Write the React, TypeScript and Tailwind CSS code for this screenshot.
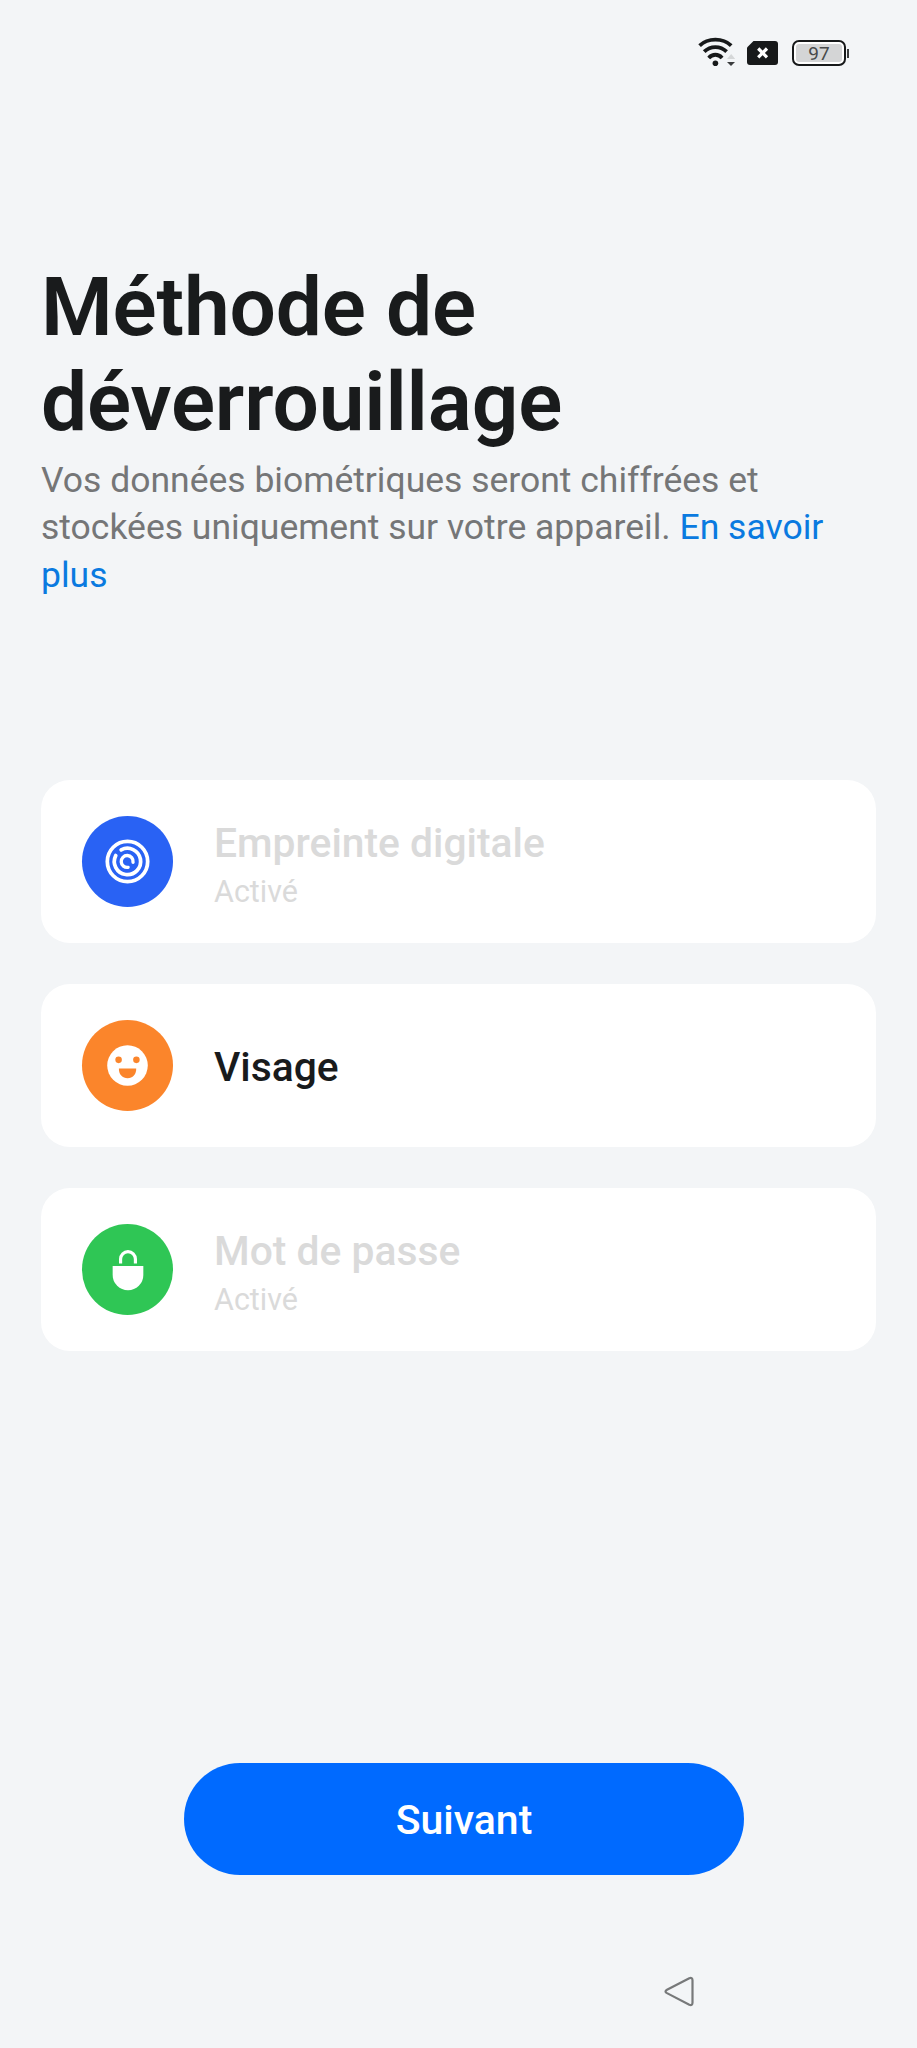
import React from "react";

const FingerprintIcon = () => (
  <svg viewBox="0 0 92 92" className="w-full h-full" fill="none" stroke="white" strokeLinecap="round">
    <circle cx="46" cy="46" r="20.4" strokeWidth="3.8" />
    <path d="M39.6 34.3A13.3 13.3 0 1 1 34.1 40" strokeWidth="3.8" />
    <path d="M46.6 51.9A6 6 0 1 1 51.6 46.8" strokeWidth="3.4" />
  </svg>
);

const FaceIcon = () => (
  <svg viewBox="0 0 92 92" className="w-full h-full">
    <circle cx="46" cy="46" r="20.5" fill="white" />
    <circle cx="37" cy="40.3" r="3.3" fill="#fb852b" />
    <circle cx="55" cy="40.3" r="3.3" fill="#fb852b" />
    <path d="M37.3 49h17.5c.2 6-3.6 9.8-8.7 9.8S37 55 37.3 49z" fill="#fb852b" />
  </svg>
);

const LockIcon = () => (
  <svg viewBox="0 0 92 92" className="w-full h-full">
    <path d="M39 40v-4.5a7.5 7.5 0 0 1 15 0V40" fill="none" stroke="white" strokeWidth="3.2" />
    <path d="M31 42.5h31v9a15.500 15.500 0 0 1-31 0z" fill="white" />
  </svg>
);

const StatusBar = () => (
  <div className="flex h-[106px] items-center pl-[697px]">
    <svg width="38" height="32" viewBox="0 0 38 32" fill="none" stroke="#17191a" strokeWidth="3.8">
      <path d="M2.6 8.6C11 .6 25.8 .6 34.2 8.6" />
      <path d="M7.2 14.7C13.5 8.5 23.3 8.5 29.6 14.7" />
      <path d="M11.7 20.9C15.5 16.7 21.3 16.7 25.1 20.9" />
      <circle cx="18.4" cy="26.3" r="2.8" fill="#17191a" stroke="none" />
      <path d="M30 22l4.2-5 4 5z" fill="#d5d7d8" stroke="none" />
      <path d="M30 25h8l-4 4z" fill="#3b3d3e" stroke="none" />
    </svg>
    <svg className="ml-[12px]" width="31" height="24" viewBox="0 0 31 24">
      <path d="M6.5 0H28a3 3 0 0 1 3 3v18a3 3 0 0 1-3 3H3a3 3 0 0 1-3-3V6.5z" fill="#17191a" />
      <path d="M11.2 7.5l8.8 8.8m0-8.8l-8.8 8.8" stroke="white" strokeWidth="3.2" />
    </svg>
    <div className="ml-[14px] flex h-[26px] w-[54px] rounded-[7px] border-2 border-[#17191a] bg-white p-[2px]">
      <div className="flex flex-1 items-center justify-center rounded-[3px] bg-[#d4d5d6] text-[19px] leading-none text-[#484a4b]">
        97
      </div>
    </div>
    <div className="ml-px h-[9px] w-[2px] bg-[#3b3d3e]" />
  </div>
);

const methods = [
  { title: "Empreinte digitale", status: "Activé", color: "bg-[#2962f4]", icon: <FingerprintIcon /> },
  { title: "Visage", color: "bg-[#fb852b]", icon: <FaceIcon /> },
  { title: "Mot de passe", status: "Activé", color: "bg-[#2fc655]", icon: <LockIcon /> },
];

export default function App() {
  return (
    <div className="flex h-[2048px] w-[917px] flex-col bg-[#f3f5f7] font-[Roboto,sans-serif] text-[#191b1c]">
      <StatusBar />

      <main className="flex flex-col px-[41px] pt-[154px]">
        <h1 className="text-[82px] leading-[95px] font-semibold tracking-[-0.15px]">
          Méthode de
          <br />
          déverrouillage
        </h1>
        <p className="mt-[6.5px] text-[35.5px] leading-[47.5px] text-[#757677]">
          Vos données biométriques seront chiffrées et
          <br />
          stockées uniquement sur votre appareil. <a className="text-[#0a7ae0]">En savoir
          <br />
          plus</a>
        </p>

        {/* Unlock methods, already configured ones are dimmed */}
        <div className="mt-[181px] flex flex-col gap-[41px]">
          {methods.map((method) => (
            <div key={method.title} className="flex h-[163px] items-center rounded-[29px] bg-white pl-[41px]">
              <div className={`h-[91px] w-[91px] shrink-0 rounded-full ${method.color}`}>{method.icon}</div>
              <div className={`ml-[41px] ${method.status ? "pt-[6px]" : "pt-[2px]"}`}>
                <div
                  className={`text-[40.8px] leading-[48px] font-medium ${method.status ? "text-[#dadada]" : "text-[#191b1c]"}`}
                >
                  {method.title}
                </div>
                {method.status && (
                  <div className="mt-[6px] text-[30.5px] leading-[38px] text-[#dadada]">{method.status}</div>
                )}
              </div>
            </div>
          ))}
        </div>
      </main>

      <button className="mt-[412px] ml-[184px] h-[112px] w-[560px] shrink-0 rounded-full bg-[#006aff] pt-[3px] text-[41px] font-medium text-white">
        Suivant
      </button>

      <div className="mt-[101px] pl-[663px]">
        <svg width="32" height="32" viewBox="0 0 32 32" fill="none" stroke="#77797a" strokeWidth="2.2">
          <path d="M26.3 2.2 4 13.7q-3 1.7 0 3.4l22.3 11.7q3.2 1 3.2-2V4.200q0-3-3.200-2z" />
        </svg>
      </div>
    </div>
  );
}
